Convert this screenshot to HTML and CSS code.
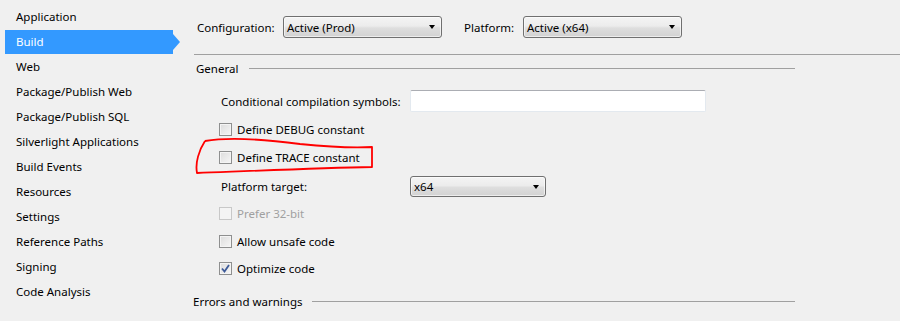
FILE: index.html
```html
<!DOCTYPE html>
<html>
<head>
<meta charset="utf-8">
<link rel="stylesheet" href="styles.css">
</head>
<body>
<div class="page">
  <nav class="sidebar">
    <div class="nav-item">Application</div>
    <div class="nav-item selected">Build</div>
    <div class="nav-item">Web</div>
    <div class="nav-item">Package/Publish Web</div>
    <div class="nav-item">Package/Publish SQL</div>
    <div class="nav-item">Silverlight Applications</div>
    <div class="nav-item">Build Events</div>
    <div class="nav-item">Resources</div>
    <div class="nav-item">Settings</div>
    <div class="nav-item">Reference Paths</div>
    <div class="nav-item">Signing</div>
    <div class="nav-item">Code Analysis</div>
  </nav>
  <main class="main">
    <div class="toolbar">
      <span class="lbl lbl-config">Configuration:</span>
      <div class="combo combo-top"><span>Active (Prod)</span><i class="arrow"></i></div>
      <span class="lbl lbl-platform">Platform:</span>
      <div class="combo combo-top"><span>Active (x64)</span><i class="arrow"></i></div>
    </div>
    <div class="rule"></div>
    <div class="group">
      <div class="group-head r-general"><span>General</span><div class="group-line"></div></div>
      <div class="row r-cond">
        <span class="field-lbl">Conditional compilation symbols:</span>
        <div class="textbox"></div>
      </div>
      <div class="row check r-debug"><span class="cb"></span><span>Define DEBUG constant</span></div>
      <div class="row check r-trace"><span class="cb"></span><span>Define TRACE constant</span></div>
      <div class="row r-target">
        <span class="field-lbl">Platform target:</span>
        <div class="combo combo-target"><span>x64</span><i class="arrow"></i></div>
      </div>
      <div class="row check disabled r-prefer"><span class="cb"></span><span>Prefer 32-bit</span></div>
      <div class="row check r-unsafe"><span class="cb"></span><span>Allow unsafe code</span></div>
      <div class="row check r-opt"><span class="cb checked"><svg width="9" height="9" viewBox="0 0 9 9"><path d="M1 4.5 L3.5 7.5 L8 1" fill="none" stroke="#3d5a98" stroke-width="1.8"/></svg></span><span>Optimize code</span></div>
      <div class="group-head r-errors"><span>Errors and warnings</span><div class="group-line"></div></div>
    </div>
  </main>
</div>
<svg class="annot" width="900" height="321" viewBox="0 0 900 321">
  <path d="M205 141 C228 137 262 139 300 144 C330 147 355 148 372 147 L372 167 C320 168 250 171 197 173 C195 163 199 150 205 141" fill="none" stroke="#ff0000" stroke-width="1.8" stroke-linejoin="round"/>
</svg>
</body>
</html>
```
FILE: styles.css
```css
html, body {
  margin: 0;
  padding: 0;
}
body {
  width: 900px;
  height: 321px;
  overflow: hidden;
  background: #f0f0f0;
  font-family: "Noto Sans", "Open Sans", sans-serif;
  font-size: 11.5px;
  color: #000;
  position: relative;
}
.page {
  display: flex;
  height: 321px;
}
.sidebar {
  width: 180px;
  flex: none;
  padding-top: 5px;
  display: flex;
  flex-direction: column;
}
.nav-item {
  height: 25px;
  line-height: 24px;
  padding-left: 16px;
  white-space: nowrap;
}
.nav-item.selected {
  background: #3399ff;
  color: #fff;
  margin-left: 5px;
  padding-left: 11px;
  width: 157px;
  height: 24px;
  margin-bottom: 1px;
  position: relative;
}
.nav-item.selected::after {
  content: "";
  position: absolute;
  right: -7px;
  top: 4px;
  border-left: 7px solid #3399ff;
  border-top: 8px solid transparent;
  border-bottom: 8px solid transparent;
}
.main {
  flex: 1;
  padding-left: 14px;
}
.toolbar {
  display: flex;
  align-items: center;
  height: 22px;
  margin-top: 16px;
}
.lbl {
  white-space: nowrap;
  flex: none;
}
.lbl-config {
  width: 89px;
  padding-left: 3px;
  box-sizing: border-box;
}
.lbl-platform {
  width: 59px;
  margin-left: 22px;
}
.combo {
  box-sizing: border-box;
  border: 1px solid #707070;
  border-radius: 3px;
  background: linear-gradient(#f4f4f4, #ececec 45%, #dedede 55%, #d2d2d2);
  display: flex;
  align-items: center;
  padding-left: 3px;
  position: relative;
  color: #000;
  flex: none;
  box-shadow: inset 0 0 0 1px rgba(255,255,255,0.6);
}
.combo-top {
  width: 159px;
  height: 22px;
}
.combo-target {
  width: 136px;
  height: 21px;
}
.combo span {
  flex: 1;
}
.arrow {
  width: 0;
  height: 0;
  border-top: 4px solid #000;
  border-left: 3.5px solid transparent;
  border-right: 3.5px solid transparent;
  margin-right: 6px;
}
.rule {
  height: 1px;
  background: #a0a0a0;
  margin-top: 16px;
}
.group {
  width: 601px;
  display: flex;
  flex-direction: column;
}
.group-head {
  display: flex;
  align-items: center;
  height: 16px;
  white-space: nowrap;
}
.group-line {
  flex: 1;
  height: 1px;
  background: #a0a0a0;
  margin-left: 11px;
}
.r-general {
  margin-top: 5px;
  padding-left: 2px;
}
.r-errors {
  margin-top: 17px;
  margin-left: -1px;
}
.r-errors .group-line {
  margin-left: 9px;
}
.row {
  display: flex;
  align-items: center;
  white-space: nowrap;
}
.field-lbl {
  width: 216px;
  flex: none;
  padding-left: 27px;
  box-sizing: border-box;
}
.r-cond {
  margin-top: 14px;
  height: 22px;
}
.textbox {
  width: 296px;
  height: 22px;
  flex: none;
  box-sizing: border-box;
  background: #fff;
  border: 1px solid #e3e9ef;
  border-top-color: #abadb3;
  border-radius: 2px;
}
.check {
  height: 16px;
  padding-left: 25px;
}
.cb {
  width: 13px;
  height: 13px;
  box-sizing: border-box;
  border: 1px solid #8e8f8f;
  background: linear-gradient(135deg, #dcdcdc, #f6f6f6);
  box-shadow: inset 0 0 0 1px #f4f4f4;
  margin-right: 5px;
  display: flex;
  align-items: center;
  justify-content: center;
  flex: none;
}
.cb.checked svg {
  display: block;
}
.disabled {
  color: #a0a0a0;
}
.disabled .cb {
  border-color: #c8c8c8;
  background: #f4f4f4;
  box-shadow: none;
}
.r-debug { margin-top: 9px; }
.r-trace { margin-top: 12px; }
.r-target { margin-top: 11px; height: 21px; }
.r-prefer { margin-top: 8px; }
.r-unsafe { margin-top: 12px; }
.r-opt { margin-top: 11px; }
.annot {
  position: absolute;
  left: 0;
  top: 0;
  pointer-events: none;
}
```
